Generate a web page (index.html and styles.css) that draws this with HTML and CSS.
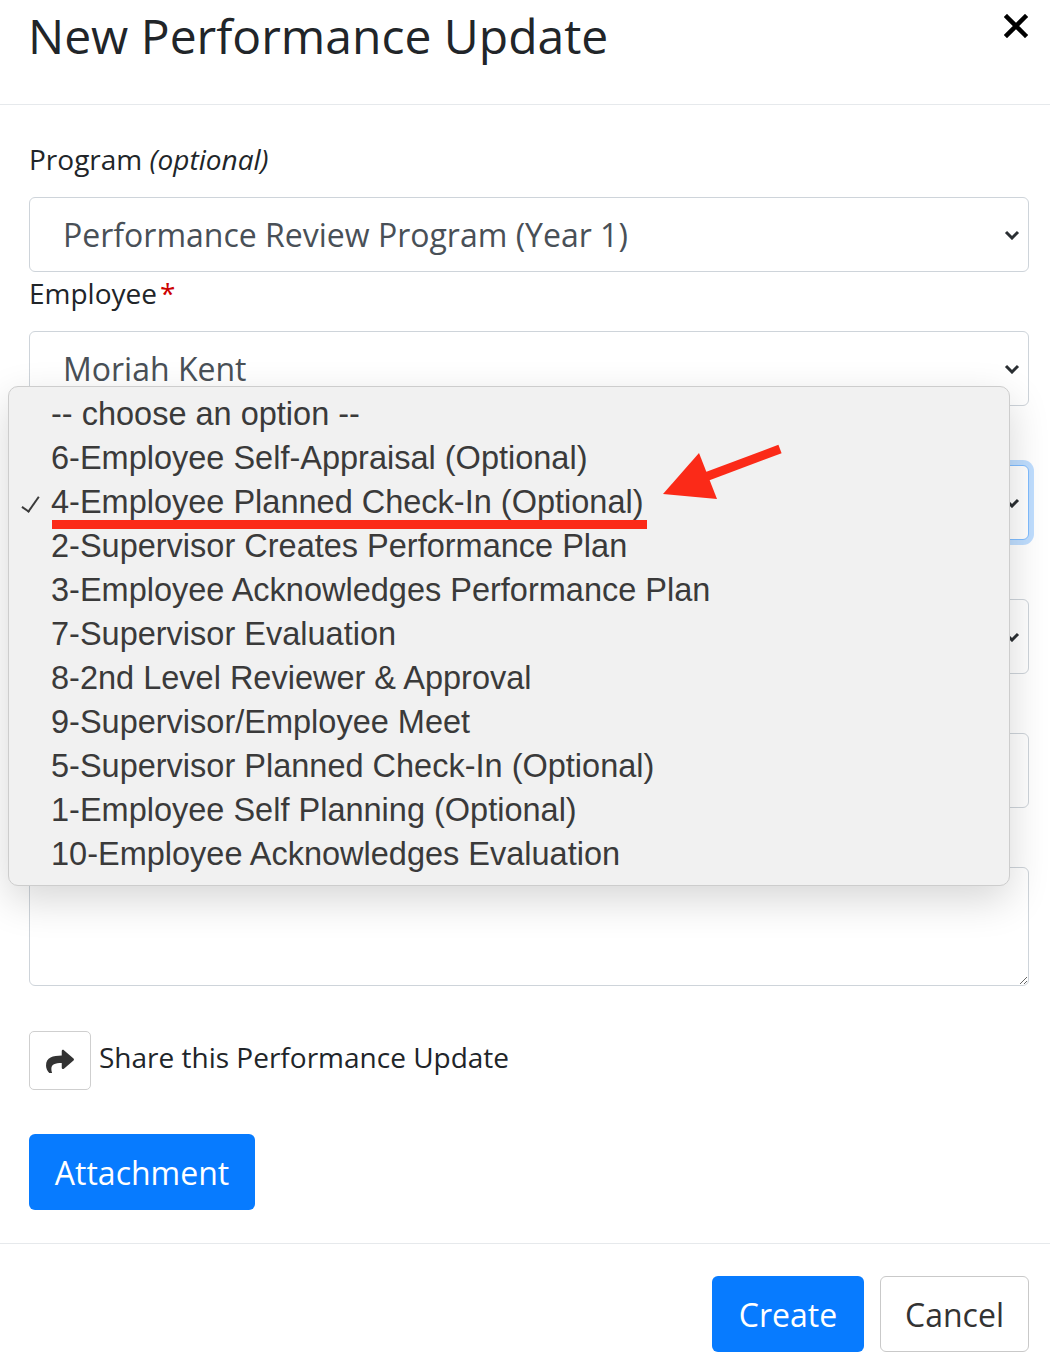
FILE: index.html
```html
<!DOCTYPE html>
<html lang="en">
<head>
    <meta charset="UTF-8">
    <meta name="viewport" content="width=device-width, initial-scale=1.0">
    <title>New Performance Update</title>
    <link rel="stylesheet" href="styles.css">
</head>
<body>
    <div class="modal">
        <header class="modal-header">
            <h1 class="modal-title">New Performance Update</h1>
            <button class="close" aria-label="Close">
                <svg width="24" height="24" viewBox="0 0 24 24"><path d="M3 3 L21 21 M21 3 L3 21" stroke="#000" stroke-width="4.5" stroke-linecap="square"/></svg>
            </button>
        </header>

        <main class="modal-body">
            <div class="form-group">
                <label>Program <em>(optional)</em></label>
                <div class="select">
                    <span>Performance Review Program (Year 1)</span>
                    <svg class="chevron" width="16" height="10" viewBox="0 0 16 10"><path d="M2 2 L8 8 L14 2" fill="none" stroke="#2b2f33" stroke-width="3"/></svg>
                </div>
            </div>
            <div class="form-group">
                <label>Employee<span class="req">*</span></label>
                <div class="select">
                    <span>Moriah Kent</span>
                    <svg class="chevron" width="16" height="10" viewBox="0 0 16 10"><path d="M2 2 L8 8 L14 2" fill="none" stroke="#2b2f33" stroke-width="3"/></svg>
                </div>
            </div>
            <!-- поля под открытым списком -->
            <div class="form-group">
                <label></label>
                <div class="select focused">
                    <span></span>
                    <svg class="chevron" width="16" height="10" viewBox="0 0 16 10"><path d="M2 2 L8 8 L14 2" fill="none" stroke="#2b2f33" stroke-width="3"/></svg>
                </div>
            </div>
            <div class="form-group">
                <label></label>
                <div class="select">
                    <span></span>
                    <svg class="chevron" width="16" height="10" viewBox="0 0 16 10"><path d="M2 2 L8 8 L14 2" fill="none" stroke="#2b2f33" stroke-width="3"/></svg>
                </div>
            </div>
            <div class="form-group">
                <label></label>
                <input class="input" type="text">
            </div>
            <div class="form-group">
                <label></label>
                <textarea class="textarea"></textarea>
            </div>

            <div class="share">
                <button class="share-btn" aria-label="Share">
                    <svg width="28" height="24" viewBox="0 0 512 440"><path d="M503.7 173.8L327.7 21.9C312.3 8.5 288 19.3 288 40v80C127.4 121.9 0 154.1 0 306.3c0 61.4 39.6 122.3 83.3 154.1 13.7 9.9 33.1-2.5 28.1-18.6C66.1 296.8 132.9 258.3 288 256.1V344c0 20.7 24.3 31.5 39.7 18.2l176-152c11.1-9.6 11.1-26.8 0-36.4z" fill="#333"/></svg>
                </button>
                <span class="share-text">Share this Performance Update</span>
            </div>

            <button class="btn btn-primary">Attachment</button>
        </main>

        <footer class="modal-footer">
            <button class="btn btn-primary">Create</button>
            <button class="btn btn-light">Cancel</button>
        </footer>

        <!-- открытый список селекта -->
        <ul class="dropdown">
            <li>-- choose an option --</li>
            <li>6-Employee Self-Appraisal (Optional)</li>
            <li class="checked">4-Employee Planned Check-In (Optional)</li>
            <li>2-Supervisor Creates Performance Plan</li>
            <li>3-Employee Acknowledges Performance Plan</li>
            <li>7-Supervisor Evaluation</li>
            <li>8-2nd Level Reviewer &amp; Approval</li>
            <li>9-Supervisor/Employee Meet</li>
            <li>5-Supervisor Planned Check-In (Optional)</li>
            <li>1-Employee Self Planning (Optional)</li>
            <li>10-Employee Acknowledges Evaluation</li>
        </ul>

        <svg class="annotation" width="1050" height="1370" viewBox="0 0 1050 1370">
            <rect x="52" y="520" width="595" height="9" fill="#fb2a18"/>
            <line x1="780" y1="449" x2="700" y2="479" stroke="#fb2a18" stroke-width="9"/>
            <polygon points="663,494 699,453 717,499" fill="#fb2a18"/>
        </svg>
    </div>
</body>
</html>
```

FILE: styles.css
```css
/* Основные стили */
body {
    margin: 0;
    font-family: 'Open Sans', sans-serif;
    color: #212529;
    background: #fff;
}

.modal {
    position: relative;
    width: 1050px;
    height: 1370px;
    overflow: hidden;
}

.modal-header {
    display: flex;
    justify-content: space-between;
    align-items: flex-start;
    height: 104px;
    padding: 0 22px 0 28px;
    border-bottom: 1px solid #e6e9ec;
}

.modal-title {
    margin: 0;
    padding-top: 7px;
    font-size: 48px;
    font-weight: 400;
    line-height: 1.2;
    color: #212529;
}

.close {
    margin-top: 14px;
    padding: 0;
    border: none;
    background: none;
    width: 24px;
    height: 24px;
}

.modal-body {
    padding: 38px 21px 33px 29px;
}

.form-group {
    margin-bottom: 5px;
}

.form-group label {
    display: block;
    height: 36px;
    font-size: 28px;
    line-height: 32px;
    margin-bottom: 18px;
}

.form-group em {
    font-style: italic;
}

.req {
    color: #c00;
    margin-left: 3px;
}

.select,
.input,
.textarea {
    box-sizing: border-box;
    width: 1000px;
    border: 1px solid #ced4da;
    border-radius: 6px;
    background: #fff;
    font-family: 'Open Sans', sans-serif;
    font-size: 32px;
    color: #495057;
}

.select {
    display: flex;
    align-items: center;
    justify-content: space-between;
    height: 75px;
    padding: 0 8px 0 33px;
}

.select.focused {
    border-color: #80bdff;
    box-shadow: 0 0 0 5px rgba(0, 123, 255, 0.25);
}

.input {
    display: block;
    height: 75px;
}

.textarea {
    display: block;
    height: 119px;
    resize: vertical;
}

.share {
    display: flex;
    align-items: center;
    gap: 8px;
    margin-top: 45px;
    font-size: 28px;
}

.share-text {
    margin-bottom: 8px;
}

.share-btn {
    display: flex;
    align-items: center;
    justify-content: center;
    width: 62px;
    height: 59px;
    padding: 0;
    border: 1px solid #cfcfcf;
    border-radius: 5px;
    background: #fff;
}

.btn {
    box-sizing: border-box;
    height: 76px;
    padding: 0 20px;
    border: 1px solid transparent;
    border-radius: 6px;
    font-family: 'Open Sans', sans-serif;
    font-size: 32px;
}

.btn-primary {
    background: #077bff;
    color: #fff;
}

.modal-body .btn-primary {
    margin-top: 44px;
    width: 226px;
}

.btn-light {
    background: #fff;
    border-color: #c9c9c9;
    color: #333;
}

.modal-footer {
    display: flex;
    justify-content: flex-end;
    gap: 16px;
    padding: 32px 21px 0 0;
    border-top: 1px solid #e6e9ec;
}

.modal-footer .btn-primary {
    width: 152px;
}

.modal-footer .btn-light {
    width: 149px;
}

/* выпадающий список поверх формы */
.dropdown {
    position: absolute;
    left: 8px;
    top: 386px;
    box-sizing: border-box;
    width: 1002px;
    height: 500px;
    margin: 0;
    padding: 5px 0 11px 42px;
    list-style: none;
    background: #f1f1f1;
    border: 1px solid #cdcdcd;
    border-radius: 10px;
    box-shadow: 0 14px 40px rgba(0, 0, 0, 0.16);
    font-family: 'Liberation Sans', Arial, sans-serif;
    font-size: 32.5px;
    color: #3a3a3a;
}

.dropdown li {
    position: relative;
    height: 44px;
    line-height: 44px;
    white-space: nowrap;
}

.dropdown li.checked::before {
    content: '';
    position: absolute;
    left: -25px;
    top: 13px;
    width: 7px;
    height: 17px;
    border-right: 2px solid #3a3a3a;
    border-bottom: 2px solid #3a3a3a;
    transform: rotate(35deg);
}

.annotation {
    position: absolute;
    left: 0;
    top: 0;
    pointer-events: none;
}
```
